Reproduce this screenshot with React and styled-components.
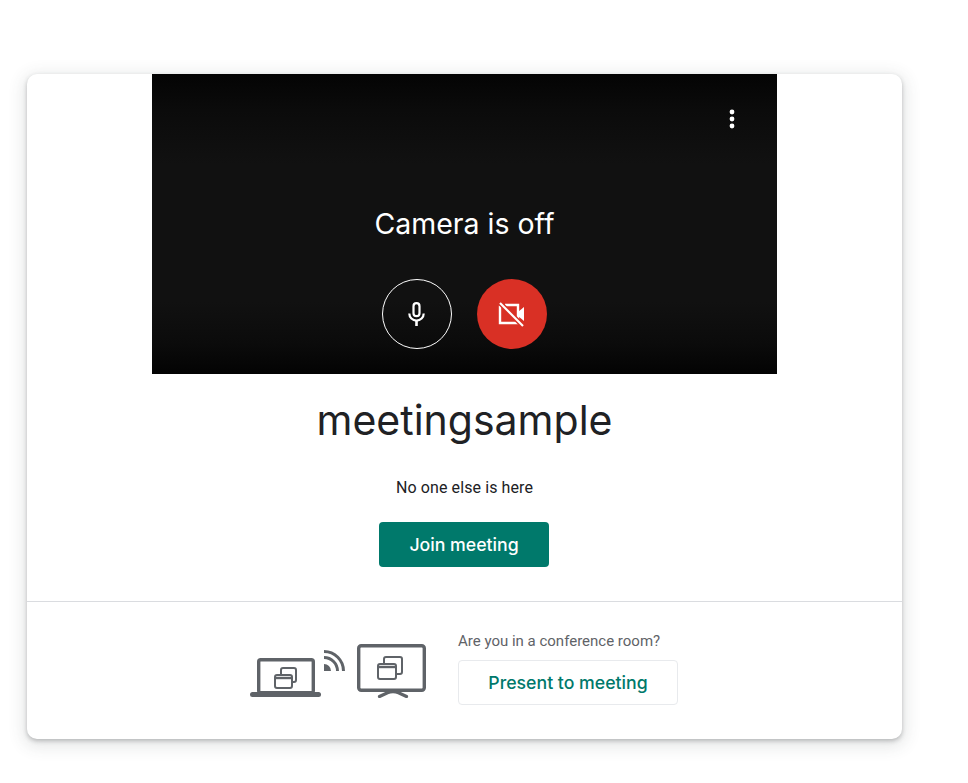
import React from "react";
import styled, { createGlobalStyle } from "styled-components";

const Global = createGlobalStyle`
  html, body { margin: 0; padding: 0; background: #fff; }
  body { font-family: Roboto, "Liberation Sans", sans-serif; }
`;

const display = `Inter, "Open Sans", sans-serif`;

const Page = styled.div`
  width: 968px;
  height: 783px;
  padding: 74px 0 0 27px;
  box-sizing: border-box;
  overflow: hidden;
`;

const Card = styled.main`
  width: 875px;
  height: 665px;
  background: #fff;
  border-radius: 10px;
  box-shadow: 0 2px 4px rgba(60, 64, 67, 0.3), 0 4px 16px 4px rgba(60, 64, 67, 0.12);
  display: flex;
  flex-direction: column;
  align-items: center;
`;

const Video = styled.section`
  position: relative;
  width: 625px;
  height: 300px;
  flex: none;
  background: linear-gradient(180deg, #040404 0%, #0b0b0b 12%, #111 30%, #111 76%, #0b0b0b 90%, #030303 100%);
  display: flex;
  flex-direction: column;
  align-items: center;
`;

const MoreButton = styled.button`
  position: absolute;
  top: 33px;
  right: 33px;
  width: 24px;
  height: 24px;
  padding: 0;
  border: 0;
  background: none;
  display: flex;
  align-items: center;
  justify-content: center;
`;

const CameraText = styled.div`
  margin-top: 132px;
  height: 36px;
  line-height: 36px;
  font-family: ${display};
  font-size: 28.5px;
  color: #fff;
`;

const Controls = styled.div`
  margin-top: 37px;
  display: flex;
  gap: 25px;
`;

const RoundButton = styled.button`
  width: 70px;
  height: 70px;
  padding: 0;
  box-sizing: border-box;
  border-radius: 50%;
  border: ${(p) => (p.$off ? "0" : "1px solid #fff")};
  background: ${(p) => (p.$off ? "#d93025" : "transparent")};
  display: flex;
  align-items: center;
  justify-content: center;
`;

const Title = styled.h1`
  margin: 21px 0 0;
  height: 50px;
  line-height: 50px;
  font-family: ${display};
  font-weight: 400;
  font-size: 41px;
  color: #202124;
`;

const Status = styled.p`
  margin: 31px 0 0;
  height: 24px;
  line-height: 24px;
  font-size: 16px;
  letter-spacing: 0.1px;
  color: #202124;
`;

const JoinButton = styled.button`
  margin: 22px 1px 0 0;
  width: 170px;
  height: 45px;
  flex: none;
  border: 0;
  border-radius: 4px;
  background: #00796b;
  color: #fff;
  font-family: ${display};
  font-weight: 500;
  font-size: 17.7px;
`;

const Divider = styled.hr`
  width: 100%;
  margin: 34px 0 0;
  border: 0;
  border-top: 1px solid #dadce0;
`;

const Footer = styled.footer`
  margin: 29px 1px 0 0;
  display: flex;
  align-items: flex-end;
  gap: 30px;
`;

const Devices = styled.svg`
  display: block;
  margin-bottom: 7px;
`;

const RoomColumn = styled.div`
  display: flex;
  flex-direction: column;
`;

const RoomQuestion = styled.div`
  height: 20px;
  line-height: 20px;
  font-size: 15px;
  color: #5f6368;
  margin-bottom: 9px;
`;

const PresentButton = styled.button`
  width: 220px;
  height: 45px;
  background: #fff;
  border: 1px solid #e8eaed;
  border-radius: 4px;
  color: #00796b;
  font-family: ${display};
  font-weight: 500;
  font-size: 17.7px;
`;

const Windows = ({ back, front }) => (
  <g fill="none" stroke="#5f6368" strokeWidth="2">
    <rect x={back[0] + 1} y={back[1] + 1} width={back[2] - 2} height={back[3] - 2} rx="2" />
    <rect x={front[0] + 1} y={front[1] + 1} width={front[2] - 2} height={front[3] - 2} rx="2" fill="#fff" />
    <path d={`M${front[0] + 1} ${front[1] + 4}H${front[0] + front[2] - 1}`} strokeWidth="2.4" />
  </g>
);

export default function App() {
  return (
    <Page>
      <Global />
      <Card>
        <Video>
          <MoreButton aria-label="More options">
            <svg width="6" height="20" viewBox="0 0 6 20" fill="#fff">
              <circle cx="3" cy="3" r="2.4" />
              <circle cx="3" cy="10" r="2.4" />
              <circle cx="3" cy="17" r="2.4" />
            </svg>
          </MoreButton>
          <CameraText>Camera is off</CameraText>
          <Controls>
            <RoundButton aria-label="Microphone">
              <svg width="24" height="26" viewBox="0 0 24 26" fill="none" stroke="#fff">
                <rect x="8.5" y="2.2" width="6" height="13" rx="3" strokeWidth="2.2" />
                <path d="M4.3 12.5a7.2 7.2 0 0 0 14.4 0" strokeWidth="2.2" />
                <path d="M11.5 19v6" strokeWidth="2.6" />
              </svg>
            </RoundButton>
            <RoundButton $off aria-label="Camera">
              <svg width="28" height="26" viewBox="0 0 28 26" fill="none">
                <path d="M7 4H20V22H2V4.5" stroke="#fff" strokeWidth="2.4" />
                <path d="M20 11l6-5v14l-6-5z" fill="#fff" />
                <path d="M2 2L25 25" stroke="#d93025" strokeWidth="5" />
                <path d="M2 2L25 25" stroke="#fff" strokeWidth="2.2" />
              </svg>
            </RoundButton>
          </Controls>
        </Video>
        <Title>meetingsample</Title>
        <Status>No one else is here</Status>
        <JoinButton>Join meeting</JoinButton>
        <Divider />
        <Footer>
          <Devices width="178" height="56" viewBox="0 0 178 56" fill="none">
            <rect x="8.7" y="17.7" width="54.6" height="33" rx="2" stroke="#5f6368" strokeWidth="3.4" />
            <path d="M2.5 52.5H68.5" stroke="#5f6368" strokeWidth="5" strokeLinecap="round" />
            <Windows back={[30, 25, 17, 16]} front={[24, 32, 19, 15]} />
            <path d="M74 22a7 7 0 0 1 7 7H74z" fill="#5f6368" />
            <path d="M74 15.5a13.5 13.5 0 0 1 13.5 13.5" stroke="#5f6368" strokeWidth="3" />
            <path d="M74 9.5a19.5 19.5 0 0 1 19.5 19.5" stroke="#5f6368" strokeWidth="3" />
            <rect x="108.7" y="3.7" width="65.6" height="44.6" rx="2.5" stroke="#5f6368" strokeWidth="3.4" />
            <Windows back={[133, 14, 20, 19]} front={[127, 21, 20, 17]} />
            <path d="M129.5 54.5l8-3.8c4-1.4 7-1.4 11 0l8 3.8" stroke="#5f6368" strokeWidth="3.2" strokeLinecap="round" />
          </Devices>
          <RoomColumn>
            <RoomQuestion>Are you in a conference room?</RoomQuestion>
            <PresentButton>Present to meeting</PresentButton>
          </RoomColumn>
        </Footer>
      </Card>
    </Page>
  );
}
